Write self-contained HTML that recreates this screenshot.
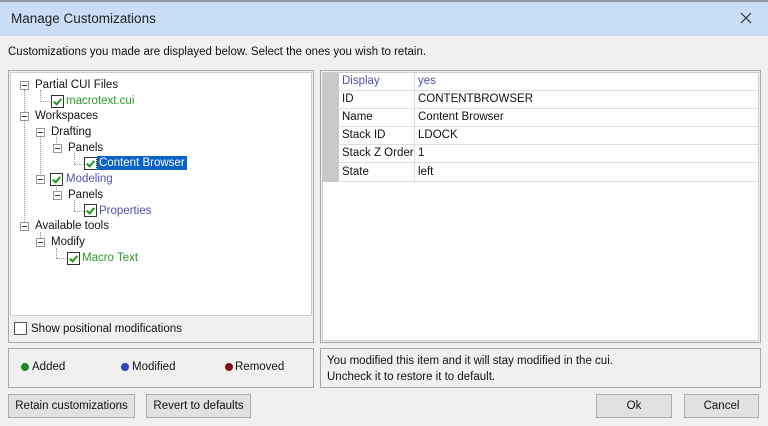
<!DOCTYPE html>
<html><head><style>
*{box-sizing:border-box;margin:0;padding:0}
body{width:768px;height:426px;background:#f0f0f0;font-family:"Liberation Sans",sans-serif;font-size:11.5px;color:#111;position:relative;overflow:hidden}
.a{position:absolute}
.title{left:0;top:0;width:768px;height:36px;background:#c9ddf6;border-top:2px solid #8e9aa8}
.box{border:1px solid #a8a8a8;background:#f0f0f0}
.btn{border:1px solid #adadad;background:#e1e1e1;text-align:center;line-height:22px}
.cb{width:13px;height:13px;border:1px solid #333;background:#fff}
.cb.c::after{content:"";position:absolute;left:3px;top:1px;width:3px;height:6px;border:solid #1a9a1a;border-width:0 2px 2px 0;transform:rotate(40deg)}
.pm{width:9px;height:9px;border:1px solid #999;background:#fff}
.pm::after{content:"";position:absolute;left:1px;top:3px;width:5px;height:1px;background:#333}
.dv{border-left:1px dotted #999;width:0}
.dh{border-top:1px dotted #999;height:0}
.t{white-space:nowrap}
.row{position:absolute;left:338px;width:420px;height:18px;border-bottom:1px solid #ddd}
.row span{position:absolute;top:2px}
.dot{width:8px;height:8px;border-radius:50%}
</style></head><body>
<div class="a title"></div>
<div class="a t" style="left:11px;top:11px;font-size:13.5px;color:#222">Manage Customizations</div>
<svg class="a" style="left:740px;top:12px" width="12" height="12"><path d="M1 1L11 11M11 1L1 11" stroke="#333" stroke-width="1.2"/></svg>
<div class="a t" style="left:8px;top:46px">Customizations you made are displayed below. Select the ones you wish to retain.</div>

<div class="a box" style="left:8px;top:70px;width:306px;height:273px"></div>
<div class="a" style="left:10px;top:72px;width:302px;height:244px;background:#fff;border:1px solid #ccc"></div>
<!-- tree -->
<div class="a dv" style="left:24px;top:90px;height:140px"></div>
<div class="a dv" style="left:40px;top:90px;height:12px"></div>
<div class="a dh" style="left:40px;top:101px;width:10px"></div>
<div class="a dv" style="left:40px;top:137px;height:43px"></div>
<div class="a dv" style="left:56px;top:137px;height:12px"></div>
<div class="a dv" style="left:74px;top:153px;height:11px"></div>
<div class="a dh" style="left:74px;top:164px;width:10px"></div>
<div class="a dv" style="left:56px;top:185px;height:11px"></div>
<div class="a dv" style="left:74px;top:200px;height:11px"></div>
<div class="a dh" style="left:74px;top:211px;width:10px"></div>
<div class="a dv" style="left:40px;top:232px;height:10px"></div>
<div class="a dv" style="left:56px;top:248px;height:10px"></div>
<div class="a dh" style="left:56px;top:258px;width:10px"></div>

<div class="a pm" style="left:20px;top:81px"></div><div class="a t" style="left:35px;top:79px">Partial CUI Files</div>
<div class="a cb c" style="left:51px;top:95px"></div><div class="a t" style="left:66px;top:95px;color:#2a9a2a">macrotext.cui</div>
<div class="a pm" style="left:20px;top:112px"></div><div class="a t" style="left:35px;top:110px">Workspaces</div>
<div class="a pm" style="left:36px;top:128px"></div><div class="a t" style="left:51px;top:126px">Drafting</div>
<div class="a pm" style="left:53px;top:144px"></div><div class="a t" style="left:68px;top:142px">Panels</div>
<div class="a cb c" style="left:84px;top:157px"></div>
<div class="a t" style="left:97px;top:156px;background:#0a64c8;color:#fff;padding:1px 2px;outline:1px dotted #fff">Content Browser</div>
<div class="a pm" style="left:36px;top:175px"></div><div class="a cb c" style="left:50px;top:173px"></div><div class="a t" style="left:66px;top:173px;color:#5050b0">Modeling</div>
<div class="a pm" style="left:53px;top:191px"></div><div class="a t" style="left:68px;top:189px">Panels</div>
<div class="a cb c" style="left:84px;top:204px"></div><div class="a t" style="left:99px;top:205px;color:#5050b0">Properties</div>
<div class="a pm" style="left:20px;top:222px"></div><div class="a t" style="left:35px;top:220px">Available tools</div>
<div class="a pm" style="left:36px;top:238px"></div><div class="a t" style="left:51px;top:236px">Modify</div>
<div class="a cb c" style="left:67px;top:252px"></div><div class="a t" style="left:82px;top:252px;color:#2a9a2a">Macro Text</div>

<div class="a cb" style="left:14px;top:322px;border-color:#555"></div>
<div class="a t" style="left:31px;top:323px">Show positional modifications</div>

<div class="a box" style="left:8px;top:348px;width:306px;height:40px"></div>
<div class="a dot" style="left:21px;top:363px;background:#1e8a2e"></div><div class="a t" style="left:32px;top:361px">Added</div>
<div class="a dot" style="left:121px;top:363px;background:#3040c0"></div><div class="a t" style="left:132px;top:361px">Modified</div>
<div class="a dot" style="left:225px;top:363px;background:#801010"></div><div class="a t" style="left:235px;top:361px">Removed</div>

<div class="a box" style="left:320px;top:70px;width:441px;height:273px"></div>
<div class="a" style="left:322px;top:72px;width:437px;height:269px;background:#fff;border:1px solid #ccc"></div>
<div class="a" style="left:323px;top:73px;width:16px;height:109px;background:#c8c8c8"></div>
<div class="a" style="left:414px;top:73px;width:1px;height:109px;background:#ddd"></div>
<div class="row" style="top:73px;color:#5050b0"><span style="left:4px">Display</span><span style="left:80px">yes</span></div>
<div class="row" style="top:91px"><span style="left:4px">ID</span><span style="left:80px">CONTENTBROWSER</span></div>
<div class="row" style="top:109px"><span style="left:4px">Name</span><span style="left:80px">Content Browser</span></div>
<div class="row" style="top:127px"><span style="left:4px">Stack ID</span><span style="left:80px">LDOCK</span></div>
<div class="row" style="top:145px"><span style="left:4px">Stack Z Order</span><span style="left:80px">1</span></div>
<div class="row" style="top:164px"><span style="left:4px">State</span><span style="left:80px">left</span></div>

<div class="a box" style="left:320px;top:348px;width:441px;height:40px"></div>
<div class="a t" style="left:327px;top:353px;line-height:16px">You modified this item and it will stay modified in the cui.<br>Uncheck it to restore it to default.</div>

<div class="a btn" style="left:8px;top:394px;width:127px;height:24px">Retain customizations</div>
<div class="a btn" style="left:146px;top:394px;width:105px;height:24px">Revert to defaults</div>
<div class="a btn" style="left:596px;top:394px;width:76px;height:24px">Ok</div>
<div class="a btn" style="left:684px;top:394px;width:75px;height:24px">Cancel</div>
</body></html>
